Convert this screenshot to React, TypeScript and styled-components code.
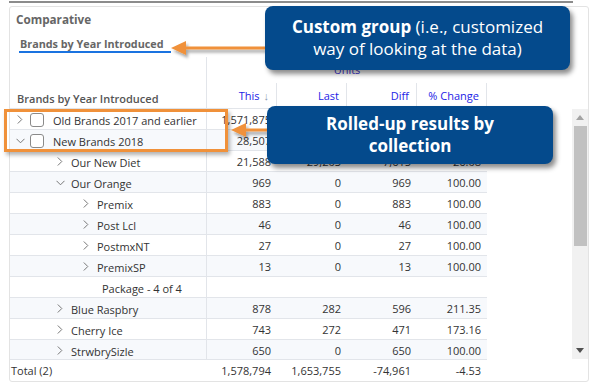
import styled, { createGlobalStyle } from "styled-components";

const GlobalStyle = createGlobalStyle`
  html, body {
    margin: 0;
    padding: 0;
    background: #fff;
  }
  body {
    font-family: "Open Sans", "Liberation Sans", sans-serif;
    font-size: 11px;
    color: #333;
  }
`;

const COLS = "197px repeat(4, 70px)";
const LINE = "#e2e5ea";
const ORANGE = "#f0913a";
const NAVY = "#044a8c";

type Row = {
  name: string;
  level: 0 | 1 | 2;
  open?: boolean;
  check?: boolean;
  leaf?: boolean;
  vals: string[];
};

const rows: Row[] = [
  { name: "Old Brands 2017 and earlier", level: 0, check: true, vals: ["1,571,875", "1,624,287", "-52,412", "-3.23"] },
  { name: "New Brands 2018", level: 0, open: true, check: true, vals: ["28,507", "29,468", "-961", "-3.26"] },
  { name: "Our New Diet", level: 1, vals: ["21,588", "29,203", "-7,615", "-26.08"] },
  { name: "Our Orange", level: 1, open: true, vals: ["969", "0", "969", "100.00"] },
  { name: "Premix", level: 2, vals: ["883", "0", "883", "100.00"] },
  { name: "Post Lcl", level: 2, vals: ["46", "0", "46", "100.00"] },
  { name: "PostmxNT", level: 2, vals: ["27", "0", "27", "100.00"] },
  { name: "PremixSP", level: 2, vals: ["13", "0", "13", "100.00"] },
  { name: "Package - 4 of 4", level: 2, leaf: true, vals: ["", "", "", ""] },
  { name: "Blue Raspbry", level: 1, vals: ["878", "282", "596", "211.35"] },
  { name: "Cherry Ice", level: 1, vals: ["743", "272", "471", "173.16"] },
  { name: "StrwbrySizle", level: 1, vals: ["650", "0", "650", "100.00"] },
];

const indent = { 0: 5, 1: 45, 2: 71 };

const Page = styled.div`
  position: relative;
  width: 599px;
  height: 388px;
  overflow: hidden;
`;

const TopRule = styled.div`
  margin: 1px 0 0 9px;
  width: 564px;
  height: 2px;
  background: #8c8c8c;
`;

const Card = styled.div`
  box-sizing: border-box;
  margin: 3px 0 0 9px;
  width: 580px;
  height: 376px;
  border: 1px solid #e3e3e3;
  border-radius: 3px;
  display: flex;
  flex-direction: column;
`;

const Title = styled.div`
  height: 24px;
  line-height: 24px;
  padding-left: 6px;
  font-weight: 700;
  font-size: 11.7px;
  color: #666;
`;

const Tab = styled.div`
  align-self: flex-start;
  margin: 0 0 4px 9px;
  padding: 6px 7px 0 1px;
  line-height: 14px;
  font-weight: 700;
  font-size: 10.8px;
  color: #666;
  border-bottom: 2px solid #1a73e0;
`;

const HeadGrid = styled.div`
  display: grid;
  grid-template-columns: ${COLS};
  grid-template-rows: 26px 26px;
  width: 477px;
  border-bottom: 1px solid ${LINE};
  box-sizing: border-box;
  height: 52px;
`;

const FirstHead = styled.div`
  grid-row: 1 / 3;
  display: flex;
  align-items: flex-end;
  padding: 0 0 3px 7px;
  font-weight: 600;
  color: #555;
  border-right: 1px solid ${LINE};
`;

const UnitsHead = styled.div`
  grid-column: 2 / 6;
  text-align: center;
  line-height: 26px;
  color: #3a2fd0;
`;

const ColHead = styled.div`
  text-align: right;
  padding: 1px 7px 0 0;
  line-height: 24px;
  color: #2323e6;
  border-right: 1px solid ${LINE};
`;

const SortArrow = styled.span`
  color: #8a9ab0;
  margin-left: 4px;
`;

const BodyWrap = styled.div`
  display: flex;
  height: 250px;
  overflow: hidden;
`;

const Table = styled.div`
  width: 477px;
  flex: none;
`;

const Gap = styled.div`
  flex: 1;
`;

const RowLine = styled.div<{ $alt: boolean }>`
  display: grid;
  grid-template-columns: ${COLS};
  height: 21px;
  box-sizing: border-box;
  border-bottom: 1px solid ${LINE};
  background: ${(p) => (p.$alt ? "#f7f9fc" : "#fff")};
`;

const NameCell = styled.div<{ $pad: number }>`
  display: flex;
  align-items: center;
  padding: 2px 0 0 ${(p) => p.$pad}px;
  border-right: 1px solid ${LINE};
  white-space: nowrap;
`;

const Toggle = styled.span`
  flex: none;
  width: 10px;
  display: flex;
  justify-content: center;
  align-items: center;
  margin-right: 6px;
`;

const Check = styled.span`
  flex: none;
  width: 14px;
  height: 14px;
  box-sizing: border-box;
  border: 1px solid #8a8a8a;
  border-radius: 3px;
  background: #fff;
  margin: 0 9px 0 -1px;
`;

const Num = styled.div`
  text-align: right;
  padding: 2px 6px 0 0;
  line-height: 18px;
`;

const TotalRow = styled.div`
  display: grid;
  grid-template-columns: ${COLS};
  width: 477px;
  height: 21px;
  border-top: 1px solid ${LINE};
`;

const TotalLabel = styled.div`
  padding: 2px 0 0 1px;
  line-height: 18px;
`;

const Scroll = styled.div`
  width: 16px;
  background: #f1f1f1;
  display: flex;
  flex-direction: column;
  align-items: center;
`;

const ScrollBtn = styled.div`
  height: 17px;
  display: flex;
  align-items: center;
  justify-content: center;
`;

const Thumb = styled.div`
  width: 13px;
  height: 120px;
  background: #c1c1c1;
`;

const Callout = styled.div<{ $l: number; $t: number; $w: number; $h: number; $bold?: boolean }>`
  position: absolute;
  left: ${(p) => p.$l}px;
  top: ${(p) => p.$t}px;
  width: ${(p) => p.$w}px;
  height: ${(p) => p.$h}px;
  box-sizing: border-box;
  background: ${NAVY};
  border-radius: 8px;
  box-shadow: 3px 4px 5px rgba(0, 0, 0, 0.45);
  color: #fff;
  font-size: 17px;
  line-height: 22px;
  font-weight: ${(p) => (p.$bold ? 700 : 400)};
  text-align: center;
  display: flex;
  flex-direction: column;
  justify-content: center;
`;

const Highlight = styled.div`
  position: absolute;
  left: 4px;
  top: 109px;
  width: 224px;
  height: 43px;
  box-sizing: border-box;
  border: 3px solid ${ORANGE};
  box-shadow: 2px 3px 4px rgba(0, 0, 0, 0.3);
`;

const ArrowSvg = styled.svg`
  position: absolute;
  overflow: visible;
`;

function Chevron({ open }: { open?: boolean }) {
  return open ? (
    <svg width="9" height="6" viewBox="0 0 9 6">
      <polyline points="0.5,0.8 4.5,4.8 8.5,0.8" fill="none" stroke="#777" strokeWidth="1" />
    </svg>
  ) : (
    <svg width="6" height="10" viewBox="0 0 6 10">
      <polyline points="0.8,0.5 4.8,4.5 0.8,8.5" fill="none" stroke="#777" strokeWidth="1" />
    </svg>
  );
}

function Arrow({ x1, x2, y }: { x1: number; x2: number; y: number }) {
  // tip at x1, tail at x2
  return (
    <ArrowSvg style={{ left: x1, top: y - 8 }} width={x2 - x1} height={16}>
      <g filter="url(#sh)">
        <line x1={12} y1={8} x2={x2 - x1} y2={8} stroke={ORANGE} strokeWidth={3} />
        <polygon points="0,8 15,1 15,15" fill={ORANGE} />
      </g>
    </ArrowSvg>
  );
}

export default function App() {
  return (
    <Page>
      <GlobalStyle />
      <svg width="0" height="0" style={{ position: "absolute" }}>
        <defs>
          <filter id="sh" x="-20%" y="-50%" width="140%" height="200%">
            <feDropShadow dx="2" dy="3" stdDeviation="1.5" floodColor="#000" floodOpacity="0.35" />
          </filter>
        </defs>
      </svg>
      <TopRule />
      <Card>
        <Title>Comparative</Title>
        <Tab>Brands by Year Introduced</Tab>
        <HeadGrid>
          <FirstHead>Brands by Year Introduced</FirstHead>
          <UnitsHead>Units</UnitsHead>
          <ColHead>
            This<SortArrow>↓</SortArrow>
          </ColHead>
          <ColHead>Last</ColHead>
          <ColHead>Diff</ColHead>
          <ColHead>% Change</ColHead>
        </HeadGrid>
        <BodyWrap>
          <Table>
            {rows.map((r, i) => (
              <RowLine key={r.name} $alt={i % 2 === 1}>
                <NameCell $pad={r.leaf ? 92 : indent[r.level]}>
                  {!r.leaf && (
                    <Toggle>
                      <Chevron open={r.open} />
                    </Toggle>
                  )}
                  {r.check && <Check />}
                  {r.name}
                </NameCell>
                {r.vals.map((v, j) => (
                  <Num key={j}>{v}</Num>
                ))}
              </RowLine>
            ))}
          </Table>
          <Gap />
          <Scroll>
            <ScrollBtn>
              <svg width="8" height="5" viewBox="0 0 8 5">
                <polygon points="0,5 4,0 8,5" fill="#a3a3a3" />
              </svg>
            </ScrollBtn>
            <Thumb />
            <Gap />
            <ScrollBtn>
              <svg width="8" height="5" viewBox="0 0 8 5">
                <polygon points="0,0 8,0 4,5" fill="#505050" />
              </svg>
            </ScrollBtn>
          </Scroll>
        </BodyWrap>
        <TotalRow>
          <TotalLabel>Total (2)</TotalLabel>
          <Num>1,578,794</Num>
          <Num>1,653,755</Num>
          <Num>-74,961</Num>
          <Num>-4.53</Num>
        </TotalRow>
      </Card>

      <Highlight />
      <Arrow x1={171} x2={272} y={48} />
      <Arrow x1={231} x2={270} y={130} />
      <Callout $l={265} $t={6} $w={305} $h={64}>
        <div>
          <b>Custom group</b> (i.e., customized
        </div>
        <div>way of looking at the data)</div>
      </Callout>
      <Callout $l={267} $t={106} $w={286} $h={58} $bold>
        <div>Rolled-up results by</div>
        <div>collection</div>
      </Callout>
    </Page>
  );
}
